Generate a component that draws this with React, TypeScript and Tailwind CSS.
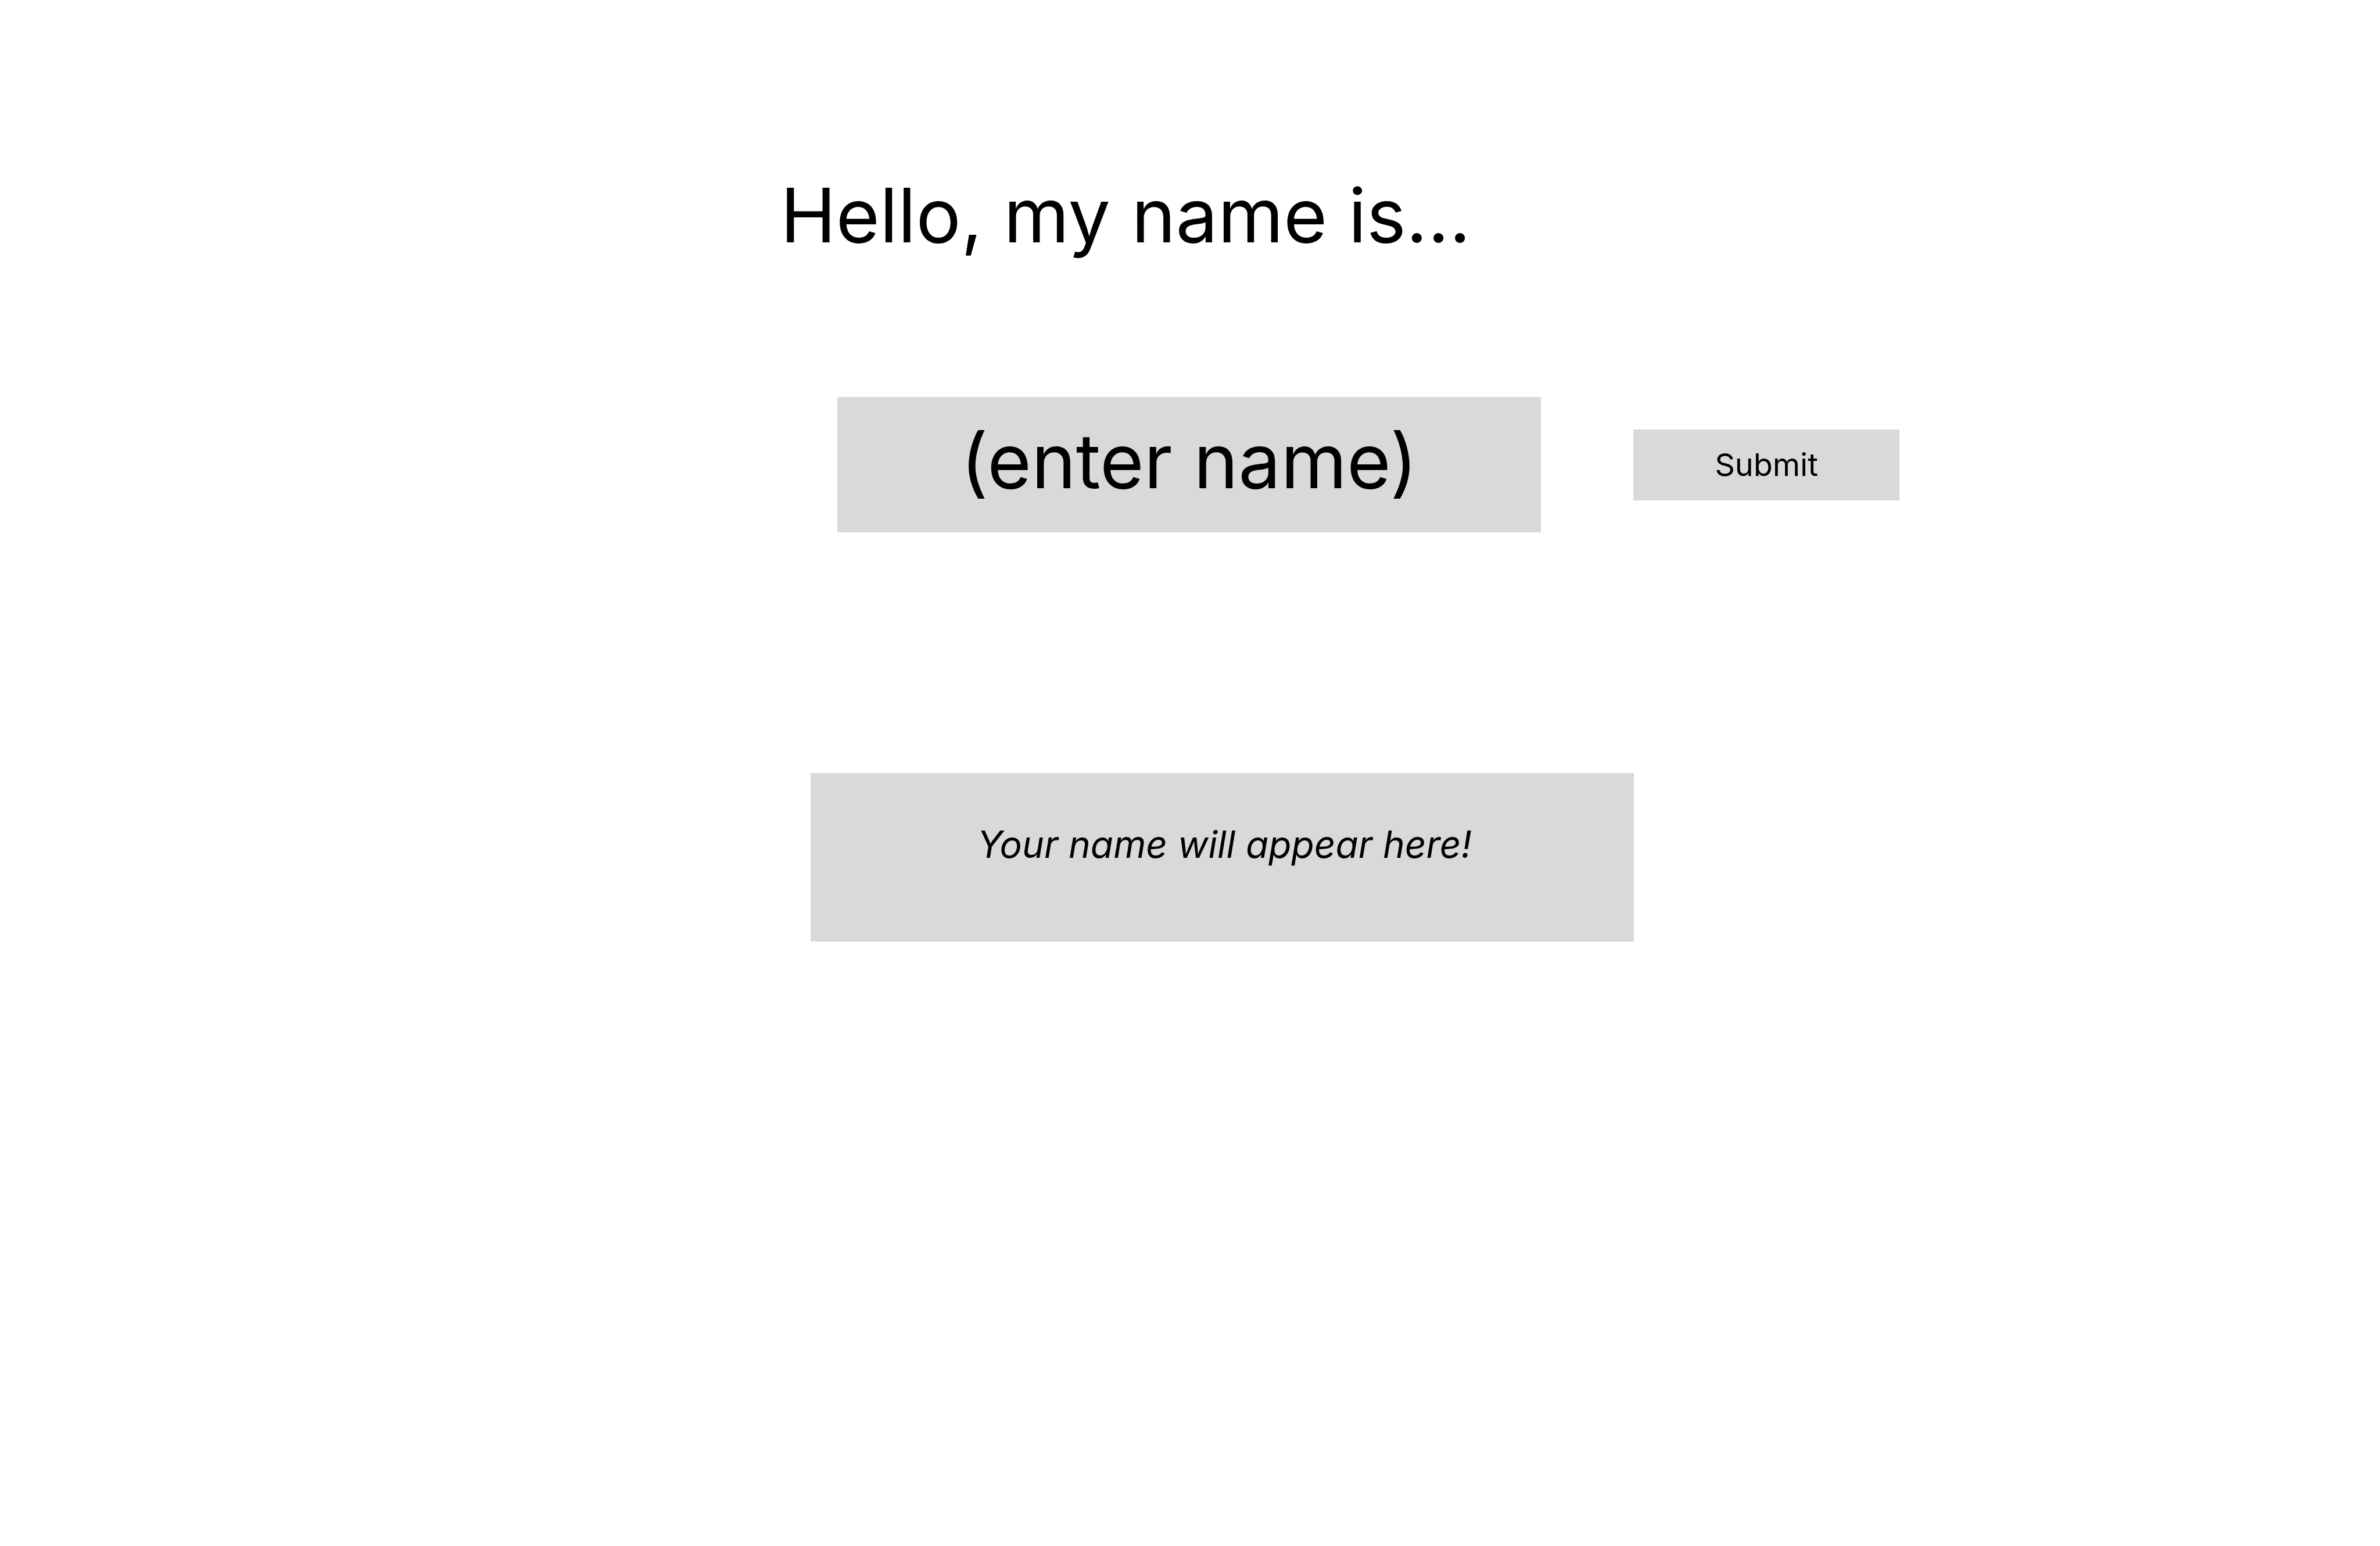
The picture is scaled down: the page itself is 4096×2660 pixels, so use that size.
import { useState, type FormEvent } from "react";

export default function App() {
  const [name, setName] = useState("");
  const [shown, setShown] = useState("");

  const submit = (event: FormEvent) => {
    event.preventDefault();
    setShown(name.trim());
  };

  return (
    <main className="min-h-screen bg-white pt-[290px] font-['Inter',sans-serif] text-black">
      <h1 className="grid grid-cols-[1343fr_2753fr] text-[129px] leading-[160px] font-normal">
        <label htmlFor="name" className="col-start-2 whitespace-nowrap">
          Hello, my name is...
        </label>
      </h1>

      <form
        onSubmit={submit}
        className="mt-[233px] grid grid-cols-[1441fr_1211fr_159fr_458fr_827fr] items-center"
      >
        <input
          id="name"
          type="text"
          value={name}
          onChange={(event) => setName(event.target.value)}
          placeholder="(enter name)"
          className="col-start-2 h-[233px] w-full min-w-0 rounded-none bg-[#d9d9d9] pb-3.5 text-center text-[130px] leading-[160px] outline-none placeholder:text-black placeholder:opacity-100"
        />
        <button
          type="submit"
          className="col-start-4 h-[122px] w-full min-w-0 cursor-pointer bg-[#d9d9d9] text-center text-[54px] leading-[66px]"
        >
          Submit
        </button>
      </form>

      <div className="mt-[414px] grid grid-cols-[1395fr_1417fr_1284fr]">
        <output
          htmlFor="name"
          className="col-start-2 flex h-[290px] items-center justify-center bg-[#d9d9d9] pb-11 pl-2 text-[64px] leading-[80px] italic"
        >
          {shown || "Your name will appear here!"}
        </output>
      </div>
    </main>
  );
}
